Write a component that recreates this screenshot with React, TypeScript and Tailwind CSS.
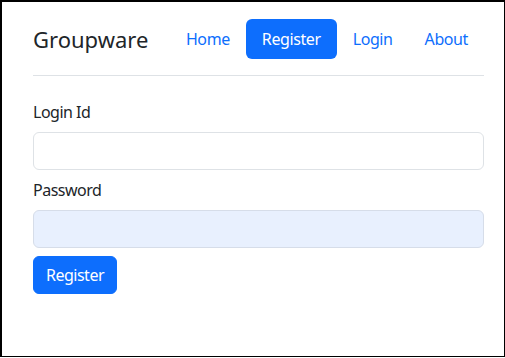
import { useState } from 'react';

export default function App() {
    const [loginId, setLoginId] = useState('');
    const [password, setPassword] = useState('');

    const navLinks = [
        { href: '#home', label: 'Home', active: false },
        { href: '#register', label: 'Register', active: true },
        { href: '#login', label: 'Login', active: false },
        { href: '#about', label: 'About', active: false },
    ];

    return (
        <div
            className="w-[505px] h-[357px] bg-white border-l-2 border-t-2 border-r border-b border-black text-[#212529] tracking-[-0.5px]"
            style={{ fontFamily: '"Segoe UI", "Noto Sans", "Open Sans", sans-serif' }}
        >
            <div className="ml-[31px] w-[451px]">
                {/* Header */}
                <header className="flex items-center justify-between pt-[17px] pb-4 border-b border-[#dee2e6] mb-6">
                    <a href="#home" className="text-[22px] leading-[33px] text-[#212529] tracking-normal">
                        Groupware
                    </a>
                    <ul className="flex items-center tracking-[-0.4px]">
                        {navLinks.map((link) => (
                            <li key={link.href}>
                                <a
                                    href={link.href}
                                    className={`block px-4 py-2 text-base leading-6 rounded-md ${
                                        link.active
                                            ? 'bg-[#0d6efd] text-white'
                                            : 'text-[#0d6efd]'
                                    }`}
                                >
                                    {link.label}
                                </a>
                            </li>
                        ))}
                    </ul>
                </header>

                {/* Form */}
                <form onSubmit={(e) => e.preventDefault()}>
                    <div className="mb-2">
                        <label htmlFor="loginId" className="block mb-2 text-base leading-6">
                            Login Id
                        </label>
                        <input
                            id="loginId"
                            type="text"
                            value={loginId}
                            onChange={(e) => setLoginId(e.target.value)}
                            className="block w-full h-[38px] px-3 border border-[#dee2e6] rounded-md bg-white outline-none"
                        />
                    </div>
                    <div className="mb-2">
                        <label htmlFor="password" className="block mb-2 text-base leading-6">
                            Password
                        </label>
                        <input
                            id="password"
                            type="password"
                            value={password}
                            onChange={(e) => setPassword(e.target.value)}
                            className="block w-full h-[38px] px-3 border border-[#d6dde9] rounded-md bg-[#e8f0fe] outline-none"
                        />
                    </div>
                    <button
                        type="submit"
                        className="h-[38px] px-3 rounded-md bg-[#0d6efd] border border-[#0d6efd] text-white text-base leading-6"
                    >
                        Register
                    </button>
                </form>
            </div>
        </div>
    );
}
